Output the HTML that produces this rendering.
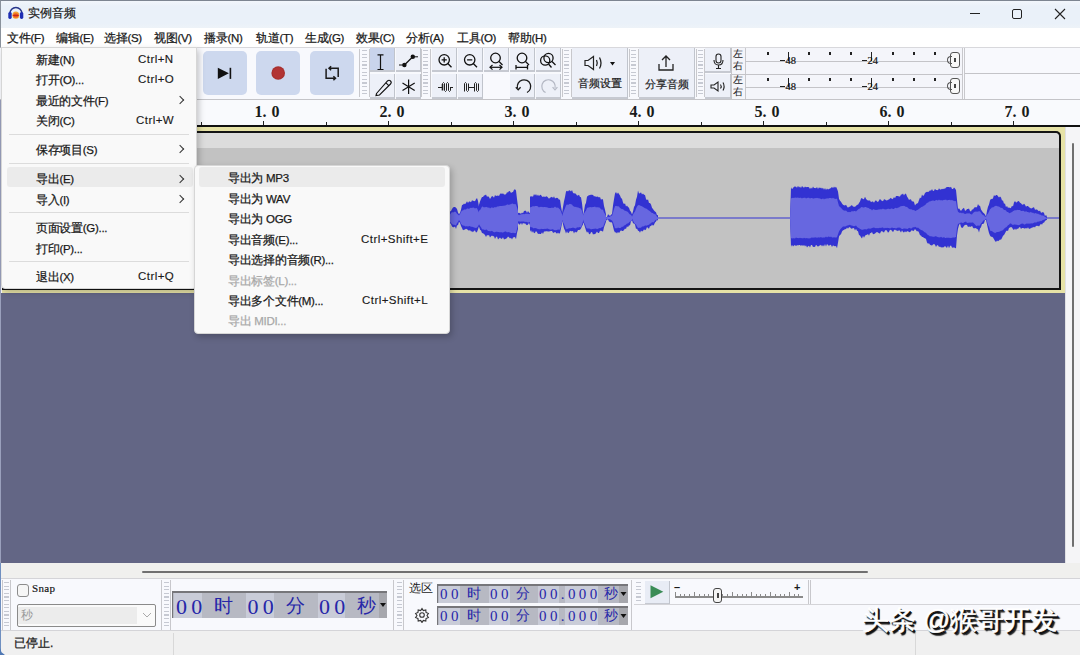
<!DOCTYPE html>
<html><head><meta charset="utf-8">
<style>
*{box-sizing:border-box;margin:0;padding:0}
html,body{width:1080px;height:655px;overflow:hidden;background:#f8f9fd;font-family:"Liberation Sans",sans-serif;font-size:12px;color:#1a1a1a}
.a{position:absolute}
.t{position:absolute;white-space:nowrap;line-height:1}
#title{left:0;top:0;width:1080px;height:28px;background:linear-gradient(#f2f6fb 0,#eaf1f9 5px,#eaf1f9 22px,#eef3f8 28px);border-top:1px solid #7d8591;border-left:1px solid #8a929c}
#menubar{left:0;top:28px;width:1080px;height:20px;background:#ffffff;border-bottom:1px solid #d8d8dc;border-left:1px solid #8a929c}
.mi{position:absolute;top:32px;font-size:11.5px;letter-spacing:-0.3px;-webkit-text-stroke:0.25px #1a1a1a;line-height:13px;white-space:nowrap;color:#1a1a1a}
.tb{background:#f8f9fd}
.btn{position:absolute;background:#edf0f8;border-right:1.5px solid #c0c4cc;border-bottom:2px solid #c6c9d1}
.grab{position:absolute;width:5px;background:repeating-linear-gradient(to bottom,#c6c9d2 0,#c6c9d2 1.2px,transparent 1.2px,transparent 3.6px)}
.sep{position:absolute;width:1px;background:#c8c8cc}
.tbtn{position:absolute;top:51px;width:44px;height:44px;background:#cdd8ee;border-radius:5px}
.menu{position:absolute;background:#f9f9f9;border:1px solid #d6d6d6;box-shadow:2px 3px 6px rgba(0,0,0,0.22)}
.mt{position:absolute;white-space:nowrap;font-size:11.5px;letter-spacing:-0.3px;-webkit-text-stroke:0.25px #1a1a1a;line-height:13px;color:#1a1a1a}
.sc{letter-spacing:0.45px;-webkit-text-stroke:0.15px #1a1a1a}
.dis{color:#a8a8a8;-webkit-text-stroke:0.25px #a8a8a8}
.msep{position:absolute;height:1px;background:#dcdcdc}
.hl{position:absolute;background:#ebebeb;border-radius:3px}
.dg{font-family:"Liberation Serif",serif;color:#2626a8}
.dc{font-family:"Liberation Serif",serif;color:#2626a8}
.arr{position:absolute;width:6px;height:6px;border-right:1.3px solid #333;border-top:1.3px solid #333;transform:rotate(45deg)}
</style></head><body>
<!-- title bar -->
<div id="title" class="a"></div>
<svg class="a" style="left:0;top:0" width="30" height="28">
 <path d="M9.9 13.5 A6 6 0 0 1 21.9 13.5" fill="none" stroke="#27358a" stroke-width="1.5"/>
 <rect x="8.3" y="11.9" width="3.4" height="7" rx="1.6" fill="#1e2eb4"/>
 <rect x="19.9" y="11.9" width="3.4" height="7" rx="1.6" fill="#1e2eb4"/>
 <ellipse cx="15.8" cy="15.2" rx="3.4" ry="3.6" fill="#f5a032"/>
 <ellipse cx="15.8" cy="15.4" rx="2.6" ry="2.2" fill="#e9571e"/>
 <path d="M12.8 15.4 H18.8" stroke="#c8201c" stroke-width="1"/>
</svg>
<div class="t" style="left:28px;top:7px;font-size:12px;color:#1a1a1a;-webkit-text-stroke:0.2px #1a1a1a">实例音频</div>
<div class="a" style="left:970px;top:13px;width:10px;height:1px;background:#222"></div>
<div class="a" style="left:1012px;top:9px;width:10px;height:10px;border:1.2px solid #222;border-radius:2px"></div>
<svg class="a" style="left:1054px;top:8px" width="12" height="12"><path d="M1 1 L11 11 M11 1 L1 11" stroke="#222" stroke-width="1.1"/></svg>
<!-- menu bar -->
<div id="menubar" class="a"></div>
<div class="mi" style="left:7px">文件(F)</div>
<div class="mi" style="left:56px">编辑(E)</div>
<div class="mi" style="left:104px">选择(S)</div>
<div class="mi" style="left:154px">视图(V)</div>
<div class="mi" style="left:204px">播录(N)</div>
<div class="mi" style="left:256px">轨道(T)</div>
<div class="mi" style="left:305px">生成(G)</div>
<div class="mi" style="left:356px">效果(C)</div>
<div class="mi" style="left:406px">分析(A)</div>
<div class="mi" style="left:457px">工具(O)</div>
<div class="mi" style="left:508px">帮助(H)</div>
<!-- top toolbar -->
<div class="a tb" style="left:0;top:48px;width:1080px;height:52px;border-bottom:1px solid #c4c4c8"></div>
<div class="tbtn" style="left:150px"></div>
<div class="tbtn" style="left:203px"></div>
<div class="tbtn" style="left:256px"></div>
<div class="tbtn" style="left:310px"></div>
<svg class="a" style="left:200px;top:50px" width="160" height="50">
 <path d="M17.8 17.8 L28.9 23.3 L17.8 28.9 Z" fill="#111"/><rect x="29.6" y="17.8" width="1.6" height="11.1" fill="#111"/>
 <circle cx="78.2" cy="23" r="6.8" fill="#a8302e"/><circle cx="78.2" cy="23" r="5.5" fill="#b23434"/>
 <g fill="none" stroke="#1a1a1a" stroke-width="1.5"><path d="M126.1 18.7 V28.3 H135.5 M133.4 26.3 L135.5 28.3 L133.4 30.3 M138.2 27 V18.3 H129 M131.1 16.3 L129 18.3 L131.1 20.3"/></g>
</svg>
<div class="sep" style="left:359px;top:49px;height:48px"></div>
<div class="grab" style="left:362px;top:50px;height:46px"></div>
<div class="sep" style="left:369px;top:49px;height:48px"></div>
<!-- tools -->
<div class="btn" style="left:370px;top:48px;width:25px;height:24px;background:#c9d4ec"></div>
<div class="btn" style="left:396px;top:48px;width:25px;height:24px"></div>
<div class="btn" style="left:370px;top:74px;width:25px;height:25px"></div>
<div class="btn" style="left:396px;top:74px;width:25px;height:25px"></div>
<svg class="a" style="left:370px;top:48px" width="52" height="52">
 <path d="M7.5 6.8 H13.5 M10.5 6.8 V21.5 M7.5 21.5 H13.5" stroke="#111" stroke-width="1.2" fill="none"/>
 <path d="M34.4 17 L42.8 8.8" stroke="#111" stroke-width="1.2"/><circle cx="34.4" cy="17" r="2.2" fill="#111"/><circle cx="42.8" cy="8.8" r="2.2" fill="#111"/><path d="M29 17 H34 M43 8.8 H48" stroke="#111" stroke-width="1"/>
 <path d="M6.5 45.5 L17.5 33 Q19 31.5 20.5 33 Q22 34.5 20.5 36 L9.5 47 L6 47.5 Z M16 34.8 L19 37.8" stroke="#111" stroke-width="1.1" fill="none"/>
 <path d="M38.6 31.5 V46 M32.5 35 L44.7 42.6 M44.7 35 L32.5 42.6" stroke="#111" stroke-width="1.2"/>
</svg>
<div class="sep" style="left:421px;top:49px;height:48px"></div>
<div class="grab" style="left:423px;top:50px;height:46px"></div>
<div class="sep" style="left:430px;top:49px;height:48px"></div>
<!-- zoom -->
<div class="btn" style="left:432px;top:48px;width:25px;height:24px"></div>
<div class="btn" style="left:458px;top:48px;width:25px;height:24px"></div>
<div class="btn" style="left:484px;top:48px;width:25px;height:24px"></div>
<div class="btn" style="left:510px;top:48px;width:25px;height:24px"></div>
<div class="btn" style="left:536px;top:48px;width:25px;height:24px"></div>
<div class="btn" style="left:432px;top:74px;width:25px;height:25px"></div>
<div class="btn" style="left:458px;top:74px;width:25px;height:25px"></div>
<div class="a" style="left:484px;top:74px;width:25px;height:25px;background:#f8f9fd"></div>
<div class="btn" style="left:510px;top:74px;width:25px;height:25px"></div>
<div class="btn" style="left:536px;top:74px;width:25px;height:25px"></div>
<svg class="a" style="left:432px;top:48px" width="130" height="52">
 <g stroke="#111" stroke-width="1.3" fill="none">
 <circle cx="12.2" cy="11.8" r="5.2"/><path d="M15.8 15.5 L19.5 19.3 M9.6 11.8 H14.8 M12.2 9.2 V14.4"/>
 <circle cx="37.7" cy="11.8" r="5.2"/><path d="M41.3 15.5 L45 19.3 M35.1 11.8 H40.3"/>
 <circle cx="63.5" cy="10" r="4.8"/><path d="M67 13.5 L70.5 17"/><path d="M58 19.3 H70" stroke-width="1.2"/><path d="M60.5 17 L58 19.3 L60.5 21.6 M67.5 17 L70 19.3 L67.5 21.6" stroke-width="1.2"/>
 <circle cx="90" cy="10" r="4.8"/><path d="M93.5 13.5 L97 17 M84 19.3 H95.5 M84 17 V21.5 M95.5 17 V21.5"/>
 <circle cx="113.2" cy="12.5" r="4.6"/><circle cx="116.5" cy="10" r="4.6"/><path d="M116.5 16 L119.5 19.5 M120 13.5 L123.5 17"/>
 </g>
 <g stroke="#222" stroke-width="1.1" fill="none">
 <path d="M6 39.5 H10.5 M18.5 39.5 H21" stroke-width="1.2"/>
 <path d="M10.5 39 V35.5 Q11.5 33.5 12.5 35.5 V42.5 Q13.5 44.5 14.5 42.5 V35.5 Q15.5 33.5 16.5 35.5 V42.5 Q17.5 44.5 18.5 42.5 V39" stroke-width="1"/>
 <path d="M10.5 36 V42.5" stroke-width="1.6"/>
 <path d="M32.5 43.5 V35.5 Q33.5 33.5 34.5 35.5 V42.5 Q35.5 44.5 36.5 42.5 V35.5 M36.5 39.5 H42.5 M42.5 43.5 V35.5 Q43.5 33.5 44.5 35.5 V42.5 Q45.5 44.5 46.5 42.5 V35.5" stroke-width="1"/>
 </g>
 <g stroke="#1a1a1a" stroke-width="1.3" fill="none"><path d="M85.5 40 A6.7 6.7 0 1 1 95 44.5"/><path d="M83.8 39.2 L86.2 41.8 L88.6 39.2"/></g>
 <g stroke="#b4b8c4" stroke-width="1.2" fill="none"><path d="M123 40 A6.7 6.7 0 1 0 113.6 44.5"/><path d="M120.6 39.2 L123 41.8 L125.4 39.2"/></g>
</svg>
<div class="sep" style="left:562px;top:49px;height:48px"></div>
<div class="grab" style="left:564px;top:50px;height:46px"></div>
<div class="sep" style="left:571px;top:49px;height:48px"></div>
<!-- audio settings -->
<div class="btn" style="left:572px;top:48px;width:56px;height:51px"></div>
<svg class="a" style="left:583px;top:55px" width="36" height="16"><path d="M2 5.5 H5 L10.5 1.5 V14.5 L5 10.5 H2 Z" fill="none" stroke="#222" stroke-width="1.2"/><path d="M13.5 5 Q15 8 13.5 11 M16.5 2.5 Q19.5 8 16.5 13.5" fill="none" stroke="#222" stroke-width="1.3"/><path d="M27 7 L32 7 L29.5 10.5 Z" fill="#111"/></svg>
<div class="t" style="left:578px;top:78px;font-size:11px;-webkit-text-stroke:0.2px #1a1a1a">音频设置</div>
<div class="sep" style="left:629px;top:49px;height:48px"></div>
<div class="grab" style="left:631px;top:50px;height:46px"></div>
<div class="sep" style="left:638px;top:49px;height:48px"></div>
<!-- share -->
<div class="btn" style="left:639px;top:48px;width:56px;height:51px"></div>
<svg class="a" style="left:656px;top:53px" width="20" height="20"><path d="M3 11 V17 H17 V11" fill="none" stroke="#222" stroke-width="1.3"/><path d="M10 14 V3 M6 7 L10 3 L14 7" fill="none" stroke="#222" stroke-width="1.3"/></svg>
<div class="t" style="left:645px;top:79px;font-size:11px;-webkit-text-stroke:0.2px #1a1a1a">分享音频</div>
<div class="sep" style="left:696px;top:49px;height:48px"></div>
<div class="grab" style="left:698px;top:50px;height:46px"></div>
<div class="sep" style="left:704px;top:49px;height:48px"></div>
<!-- meters -->
<div class="btn" style="left:705px;top:48px;width:26px;height:25px"></div>
<div class="btn" style="left:705px;top:74px;width:26px;height:25px"></div>
<svg class="a" style="left:708px;top:50px" width="20" height="48">
 <rect x="8" y="4" width="5" height="9" rx="2.5" fill="none" stroke="#222" stroke-width="1.1"/><path d="M6 10 Q6 15 10.5 15 Q15 15 15 10 M10.5 15 V18 M8 18.5 H13" fill="none" stroke="#222" stroke-width="1.1"/>
 <path d="M3 35 H6 L10 32 V41 L6 38 H3 Z" fill="none" stroke="#222" stroke-width="1.1"/><path d="M12.5 34.5 Q14 36.5 12.5 38.5 M15 32.5 Q17.2 36.5 15 40.5" fill="none" stroke="#222" stroke-width="1.1"/>
</svg>
<div class="a" style="left:731px;top:48px;width:232px;height:51px;background:#f4f5fa;border-left:1px solid #c4c4c8"></div>
<div class="t" style="left:733px;top:49px;font-size:10px">左</div>
<div class="t" style="left:733px;top:61px;font-size:10px">右</div>
<div class="t" style="left:733px;top:75px;font-size:10px">左</div>
<div class="t" style="left:733px;top:87px;font-size:10px">右</div>
<div class="a" style="left:745px;top:48px;width:218px;height:51px;border-left:1px solid #c8c8cc"></div>
<div class="a" style="left:745px;top:61px;width:215px;height:1px;background:#c4c4c8"></div>
<div class="a" style="left:731px;top:74px;width:232px;height:1px;background:#c4c4c8"></div>
<div class="a" style="left:745px;top:87px;width:215px;height:1px;background:#c4c4c8"></div>
<div class="a" style="left:731px;top:99px;width:232px;height:1px;background:#c4c4c8"></div>
<div class="a" style="left:767px;top:52px;width:1.5px;height:2.5px;background:#222"></div>
<div class="a" style="left:767px;top:78px;width:1.5px;height:2.5px;background:#222"></div>
<div class="a" style="left:788px;top:52px;width:1px;height:9px;background:#222"></div>
<div class="a" style="left:788px;top:78px;width:1px;height:9px;background:#222"></div>
<div class="a" style="left:808px;top:52px;width:1.5px;height:2.5px;background:#222"></div>
<div class="a" style="left:808px;top:78px;width:1.5px;height:2.5px;background:#222"></div>
<div class="a" style="left:829px;top:52px;width:1.5px;height:2.5px;background:#222"></div>
<div class="a" style="left:829px;top:78px;width:1.5px;height:2.5px;background:#222"></div>
<div class="a" style="left:850px;top:52px;width:1.5px;height:2.5px;background:#222"></div>
<div class="a" style="left:850px;top:78px;width:1.5px;height:2.5px;background:#222"></div>
<div class="a" style="left:871px;top:52px;width:1px;height:9px;background:#222"></div>
<div class="a" style="left:871px;top:78px;width:1px;height:9px;background:#222"></div>
<div class="a" style="left:892px;top:52px;width:1.5px;height:2.5px;background:#222"></div>
<div class="a" style="left:892px;top:78px;width:1.5px;height:2.5px;background:#222"></div>
<div class="a" style="left:913px;top:52px;width:1.5px;height:2.5px;background:#222"></div>
<div class="a" style="left:913px;top:78px;width:1.5px;height:2.5px;background:#222"></div>
<div class="a" style="left:934px;top:52px;width:1.5px;height:2.5px;background:#222"></div>
<div class="a" style="left:934px;top:78px;width:1.5px;height:2.5px;background:#222"></div>
<div class="a" style="left:780px;top:60px;width:5px;height:1px;background:#222"></div><div class="t" style="left:785.5px;top:55.5px;font-size:10.5px;color:#111;font-family:'Liberation Serif',serif;-webkit-text-stroke:0.2px #111">48</div>
<div class="a" style="left:862px;top:60px;width:5px;height:1px;background:#222"></div><div class="t" style="left:867.5px;top:55.5px;font-size:10.5px;color:#111;font-family:'Liberation Serif',serif;-webkit-text-stroke:0.2px #111">24</div>
<div class="a" style="left:780px;top:86px;width:5px;height:1px;background:#222"></div><div class="t" style="left:785.5px;top:81.5px;font-size:10.5px;color:#111;font-family:'Liberation Serif',serif;-webkit-text-stroke:0.2px #111">48</div>
<div class="a" style="left:862px;top:86px;width:5px;height:1px;background:#222"></div><div class="t" style="left:867.5px;top:81.5px;font-size:10.5px;color:#111;font-family:'Liberation Serif',serif;-webkit-text-stroke:0.2px #111">24</div>
<div class="a" style="left:950px;top:52px;width:10px;height:16px;border:1.2px solid #555;border-radius:3px;background:#f8f8f8"></div>
<div class="a" style="left:954px;top:58px;width:1.5px;height:4px;background:#444"></div>
<div class="a" style="left:947px;top:56px;width:5px;height:8px;border:1px solid #555;border-right:none;border-radius:4px 0 0 4px"></div>
<div class="a" style="left:950px;top:78px;width:10px;height:16px;border:1.2px solid #555;border-radius:3px;background:#f8f8f8"></div>
<div class="a" style="left:954px;top:84px;width:1.5px;height:4px;background:#444"></div>
<div class="a" style="left:947px;top:82px;width:5px;height:8px;border:1px solid #555;border-right:none;border-radius:4px 0 0 4px"></div>
<div class="sep" style="left:962px;top:48px;height:51px"></div>
<div class="sep" style="left:964px;top:48px;height:51px"></div>
<div class="a" style="left:965px;top:73px;width:115px;height:1px;background:#c4c4c8"></div>
<!-- ruler -->
<div class="a" style="left:0;top:100px;width:1080px;height:27px;background:#f9fafd"></div>
<div class="a" style="left:138px;top:121px;width:1px;height:4px;background:#222"></div>
<div class="a" style="left:201px;top:122px;width:1px;height:3px;background:#222"></div>
<div class="a" style="left:263px;top:121px;width:1px;height:4px;background:#222"></div>
<div class="t" style="left:254.5px;top:104px;font-family:'Liberation Serif',serif;font-weight:bold;font-size:16px">1.</div>
<div class="t" style="left:271.5px;top:104px;font-family:'Liberation Serif',serif;font-weight:bold;font-size:16px">0</div>
<div class="a" style="left:326px;top:122px;width:1px;height:3px;background:#222"></div>
<div class="a" style="left:388px;top:121px;width:1px;height:4px;background:#222"></div>
<div class="t" style="left:379.5px;top:104px;font-family:'Liberation Serif',serif;font-weight:bold;font-size:16px">2.</div>
<div class="t" style="left:396.5px;top:104px;font-family:'Liberation Serif',serif;font-weight:bold;font-size:16px">0</div>
<div class="a" style="left:451px;top:122px;width:1px;height:3px;background:#222"></div>
<div class="a" style="left:513px;top:121px;width:1px;height:4px;background:#222"></div>
<div class="t" style="left:504.5px;top:104px;font-family:'Liberation Serif',serif;font-weight:bold;font-size:16px">3.</div>
<div class="t" style="left:521.5px;top:104px;font-family:'Liberation Serif',serif;font-weight:bold;font-size:16px">0</div>
<div class="a" style="left:576px;top:122px;width:1px;height:3px;background:#222"></div>
<div class="a" style="left:638px;top:121px;width:1px;height:4px;background:#222"></div>
<div class="t" style="left:629.5px;top:104px;font-family:'Liberation Serif',serif;font-weight:bold;font-size:16px">4.</div>
<div class="t" style="left:646.5px;top:104px;font-family:'Liberation Serif',serif;font-weight:bold;font-size:16px">0</div>
<div class="a" style="left:701px;top:122px;width:1px;height:3px;background:#222"></div>
<div class="a" style="left:763px;top:121px;width:1px;height:4px;background:#222"></div>
<div class="t" style="left:754.5px;top:104px;font-family:'Liberation Serif',serif;font-weight:bold;font-size:16px">5.</div>
<div class="t" style="left:771.5px;top:104px;font-family:'Liberation Serif',serif;font-weight:bold;font-size:16px">0</div>
<div class="a" style="left:826px;top:122px;width:1px;height:3px;background:#222"></div>
<div class="a" style="left:888px;top:121px;width:1px;height:4px;background:#222"></div>
<div class="t" style="left:879.5px;top:104px;font-family:'Liberation Serif',serif;font-weight:bold;font-size:16px">6.</div>
<div class="t" style="left:896.5px;top:104px;font-family:'Liberation Serif',serif;font-weight:bold;font-size:16px">0</div>
<div class="a" style="left:951px;top:122px;width:1px;height:3px;background:#222"></div>
<div class="a" style="left:1013px;top:121px;width:1px;height:4px;background:#222"></div>
<div class="t" style="left:1004.5px;top:104px;font-family:'Liberation Serif',serif;font-weight:bold;font-size:16px">7.</div>
<div class="t" style="left:1021.5px;top:104px;font-family:'Liberation Serif',serif;font-weight:bold;font-size:16px">0</div>
<div class="a" style="left:2px;top:125px;width:1078px;height:2px;background:#111"></div>
<!-- track -->
<div class="a" style="left:2px;top:127px;width:1063px;height:166px;background:#e6e2a6"></div>
<div class="a" style="left:2px;top:131px;width:1059px;height:159px;background:#141414;border-radius:0 5px 0 0"></div>
<div class="a" style="left:2px;top:133px;width:1057px;height:155px;background:#c2c2c2;border-radius:0 4px 0 0"></div>
<div class="a" style="left:2px;top:133px;width:1057px;height:15px;background:#dcdcdc;border-radius:0 4px 0 0"></div>
<svg width="1080" height="655" style="position:absolute;left:0;top:0"><line x1="440" y1="218" x2="1059" y2="218" stroke="#3232d2" stroke-width="1"/><path fill="#3232d2" d="M450,211.5 L451,211.0 L452,209.1 L453,207.4 L454,207.1 L455,207.0 L456,207.8 L457,208.9 L458,212.4 L459,214.2 L460,212.8 L461,209.7 L462,204.9 L463,204.7 L464,203.5 L465,204.2 L466,203.1 L467,201.3 L468,202.9 L469,201.4 L470,201.5 L471,202.2 L472,200.2 L473,200.7 L474,200.9 L475,201.2 L476,199.2 L477,198.0 L478,201.1 L479,206.8 L479,226.2 L478,229.5 L477,232.0 L476,232.6 L475,230.5 L474,230.8 L473,232.3 L472,231.2 L471,231.4 L470,230.1 L469,230.8 L468,230.1 L467,229.3 L466,228.7 L465,229.4 L464,229.7 L463,230.2 L462,227.9 L461,226.0 L460,223.0 L459,221.7 L458,225.3 L457,225.2 L456,229.0 L455,226.5 L454,227.3 L453,227.3 L452,226.6 L451,224.2 L450,223.0 Z M479,204.7 L480,201.5 L481,199.0 L482,197.1 L483,197.0 L484,195.5 L485,195.3 L486,194.6 L487,196.8 L488,196.3 L489,197.1 L490,199.0 L491,197.6 L492,196.1 L493,196.5 L494,197.7 L495,194.9 L496,196.1 L497,195.8 L498,195.4 L499,196.1 L500,194.0 L501,193.3 L502,194.1 L503,193.3 L504,194.6 L505,194.6 L506,194.3 L507,192.3 L508,192.6 L509,191.1 L510,191.3 L511,192.9 L512,192.3 L513,192.1 L514,189.7 L515,189.3 L516,190.4 L517,199.0 L518,206.5 L518,228.9 L517,232.9 L516,239.2 L515,237.1 L514,237.2 L513,237.6 L512,239.5 L511,237.8 L510,238.6 L509,237.3 L508,236.6 L507,238.1 L506,238.7 L505,238.9 L504,239.5 L503,237.2 L502,238.8 L501,238.8 L500,237.6 L499,238.6 L498,239.4 L497,236.6 L496,236.9 L495,239.0 L494,236.3 L493,236.3 L492,235.5 L491,236.3 L490,237.5 L489,234.9 L488,235.5 L487,234.9 L486,237.1 L485,235.1 L484,234.0 L483,233.2 L482,233.0 L481,230.4 L480,229.7 L479,226.7 Z M518,212.9 L519,212.8 L520,213.3 L521,213.8 L522,212.5 L523,213.2 L524,210.9 L525,210.7 L526,210.7 L527,212.9 L528,211.0 L529,212.5 L530,213.1 L530,225.4 L529,222.9 L528,224.6 L527,225.2 L526,224.5 L525,223.2 L524,223.8 L523,222.7 L522,225.0 L521,222.8 L520,224.5 L519,224.5 L518,223.1 Z M530,196.6 L531,196.6 L532,196.3 L533,196.7 L534,193.9 L535,195.4 L536,194.1 L537,196.1 L538,194.4 L539,196.2 L540,194.8 L541,194.9 L542,196.4 L543,196.9 L544,196.3 L545,197.3 L546,196.3 L547,196.4 L548,197.4 L549,198.7 L550,197.8 L551,197.2 L552,196.8 L553,198.1 L554,196.3 L555,198.4 L556,198.0 L557,197.7 L558,198.2 L559,199.8 L560,199.5 L561,206.6 L562,211.7 L562,223.5 L561,228.4 L560,233.0 L559,233.7 L558,232.5 L557,233.8 L556,232.8 L555,231.7 L554,232.7 L553,232.8 L552,231.0 L551,230.9 L550,231.3 L549,231.5 L548,231.4 L547,231.2 L546,231.2 L545,231.6 L544,231.4 L543,233.9 L542,232.3 L541,234.0 L540,234.1 L539,233.7 L538,234.0 L537,232.3 L536,231.0 L535,232.8 L534,233.3 L533,231.0 L532,232.7 L531,230.1 L530,231.8 Z M562,213.2 L563,207.1 L564,201.3 L565,196.9 L566,191.4 L567,190.7 L568,191.4 L569,190.3 L570,190.5 L571,191.4 L572,190.1 L573,192.7 L574,193.4 L575,193.3 L576,193.9 L577,195.4 L578,195.6 L579,194.7 L580,197.1 L581,197.2 L582,203.2 L583,212.5 L583,224.6 L582,226.3 L581,228.5 L580,229.8 L579,230.1 L578,229.9 L577,232.0 L576,232.6 L575,231.6 L574,233.4 L573,231.1 L572,231.3 L571,231.3 L570,230.7 L569,232.4 L568,233.2 L567,231.3 L566,233.5 L565,230.6 L564,228.5 L563,224.3 L562,220.6 Z M583,215.3 L584,211.0 L585,205.1 L586,202.7 L587,196.6 L588,195.9 L589,195.0 L590,195.2 L591,194.6 L592,195.0 L593,194.8 L594,196.5 L595,195.9 L596,197.0 L597,196.5 L598,196.7 L599,197.6 L600,197.0 L601,199.7 L602,199.1 L603,199.4 L604,206.1 L605,209.8 L606,214.2 L606,221.7 L605,224.4 L604,227.3 L603,231.7 L602,230.9 L601,230.7 L600,230.8 L599,233.0 L598,232.9 L597,231.6 L596,233.1 L595,234.2 L594,233.9 L593,234.4 L592,232.1 L591,232.3 L590,234.3 L589,234.0 L588,231.6 L587,232.8 L586,230.5 L585,227.2 L584,224.1 L583,222.6 Z M606,217.0 L607,217.1 L608,214.2 L609,215.1 L610,216.0 L611,214.8 L612,213.9 L613,205.6 L614,199.2 L615,193.4 L616,192.1 L617,193.9 L618,192.6 L619,194.1 L620,195.5 L621,197.9 L622,198.8 L623,202.6 L624,204.2 L625,203.2 L626,206.4 L627,205.4 L628,207.0 L629,207.8 L630,210.8 L631,211.8 L632,214.5 L632,220.8 L631,221.3 L630,225.6 L629,225.3 L628,227.3 L627,226.2 L626,229.0 L625,228.4 L624,229.9 L623,231.0 L622,231.1 L621,230.3 L620,231.6 L619,233.2 L618,231.7 L617,233.6 L616,232.3 L615,232.4 L614,230.6 L613,226.5 L612,222.2 L611,222.5 L610,222.0 L609,221.5 L608,219.6 L607,219.6 L606,221.1 Z M632,214.6 L633,211.6 L634,207.1 L635,205.2 L636,199.7 L637,196.8 L638,190.6 L639,193.5 L640,193.2 L641,192.3 L642,194.4 L643,193.5 L644,194.8 L645,195.0 L646,198.9 L647,200.2 L648,199.2 L649,203.0 L650,202.9 L651,204.6 L652,207.7 L653,208.9 L654,210.6 L655,211.5 L656,212.3 L657,215.2 L658,215.1 L658,220.8 L657,219.7 L656,221.6 L655,222.5 L654,224.8 L653,225.7 L652,224.6 L651,226.2 L650,226.1 L649,228.8 L648,227.9 L647,227.1 L646,229.4 L645,230.3 L644,229.3 L643,231.1 L642,231.4 L641,230.6 L640,232.7 L639,231.0 L638,230.7 L637,228.6 L636,228.9 L635,224.6 L634,223.6 L633,223.3 L632,219.9 Z M790,218.5 L791,187.3 L792,189.2 L793,188.1 L794,186.8 L795,186.5 L796,186.7 L797,187.8 L798,185.8 L799,187.6 L800,186.4 L801,188.0 L802,185.9 L803,186.9 L804,187.8 L805,186.4 L806,187.2 L807,187.0 L808,187.1 L809,187.3 L810,188.9 L811,187.5 L812,188.7 L813,186.6 L814,187.9 L815,187.9 L816,188.2 L817,186.9 L818,188.9 L819,187.3 L820,188.2 L821,187.6 L822,188.8 L823,187.7 L824,189.8 L825,188.1 L826,190.0 L827,188.4 L828,189.4 L829,189.1 L830,188.5 L831,188.1 L832,186.7 L833,188.2 L834,186.6 L835,187.7 L836,186.7 L837,188.7 L838,191.6 L839,198.8 L840,200.8 L841,201.8 L842,203.6 L843,204.8 L844,205.2 L845,205.6 L846,204.8 L847,206.6 L848,207.8 L849,206.7 L850,206.7 L851,205.5 L852,205.3 L853,206.4 L854,206.7 L855,206.8 L856,206.0 L857,204.7 L858,204.7 L859,203.1 L860,201.4 L861,198.4 L862,198.0 L863,199.2 L864,198.9 L865,196.7 L866,198.8 L867,200.0 L868,200.6 L869,200.5 L870,200.5 L871,202.2 L872,201.6 L873,201.6 L874,202.8 L875,200.9 L876,200.3 L877,201.5 L878,201.9 L879,200.6 L880,198.8 L881,200.3 L882,200.7 L883,201.2 L884,199.2 L885,199.4 L886,200.2 L887,200.4 L888,199.8 L889,199.5 L890,198.6 L891,197.7 L892,199.3 L893,198.7 L894,197.1 L895,198.3 L896,196.0 L897,195.9 L898,195.9 L899,196.6 L900,196.4 L901,194.5 L902,194.4 L903,193.6 L904,195.5 L905,193.7 L906,193.7 L907,196.6 L908,198.0 L909,200.1 L910,199.2 L911,199.5 L912,201.4 L913,201.2 L914,201.9 L915,205.5 L916,204.1 L917,203.5 L918,202.9 L919,199.9 L920,197.6 L921,198.3 L922,194.5 L923,196.0 L924,195.2 L925,192.9 L926,192.2 L927,191.8 L928,192.1 L929,191.4 L930,190.2 L931,190.8 L932,189.1 L933,191.1 L934,190.7 L935,188.8 L936,190.1 L937,190.0 L938,190.3 L939,188.3 L940,189.4 L941,189.4 L942,188.7 L943,189.3 L944,188.4 L945,188.7 L946,187.5 L947,187.0 L948,187.1 L949,186.9 L950,187.5 L951,186.8 L952,188.9 L953,189.1 L954,187.4 L955,188.4 L956,190.0 L957,199.7 L958,209.0 L959,208.2 L960,209.8 L961,211.0 L962,209.4 L963,208.4 L964,207.8 L965,210.8 L966,210.5 L967,208.9 L968,209.0 L969,208.6 L970,211.1 L971,211.4 L972,209.6 L973,209.5 L974,207.9 L975,207.1 L976,207.6 L977,207.0 L978,204.0 L979,205.8 L980,205.8 L981,209.6 L982,211.1 L983,212.5 L984,213.3 L985,214.4 L986,216.6 L987,210.8 L988,206.7 L989,204.6 L990,200.4 L991,198.7 L992,199.2 L993,198.2 L994,195.1 L995,196.2 L996,195.0 L997,195.0 L998,196.3 L999,197.4 L1000,196.5 L1001,197.5 L1002,200.5 L1003,200.5 L1004,203.8 L1005,203.4 L1006,207.2 L1007,205.8 L1008,208.1 L1009,207.2 L1010,208.2 L1011,207.7 L1012,205.8 L1013,206.4 L1014,202.5 L1015,201.1 L1016,202.5 L1017,202.2 L1018,201.1 L1019,201.3 L1020,202.7 L1021,203.2 L1022,204.6 L1023,204.8 L1024,203.7 L1025,204.8 L1026,206.7 L1027,206.1 L1028,206.0 L1029,207.3 L1030,207.8 L1031,208.4 L1032,208.2 L1033,207.6 L1034,207.3 L1035,209.7 L1036,209.6 L1037,209.4 L1038,210.4 L1039,211.2 L1040,210.4 L1041,212.8 L1042,212.6 L1043,211.9 L1044,213.0 L1045,216.3 L1046,214.8 L1047,217.1 L1047,219.7 L1046,220.2 L1045,221.1 L1044,222.8 L1043,222.8 L1042,224.8 L1041,223.7 L1040,225.1 L1039,226.6 L1038,225.7 L1037,226.1 L1036,225.8 L1035,227.4 L1034,226.8 L1033,227.6 L1032,227.4 L1031,228.3 L1030,228.6 L1029,229.1 L1028,227.2 L1027,228.7 L1026,227.8 L1025,228.7 L1024,228.3 L1023,227.9 L1022,228.0 L1021,229.0 L1020,226.9 L1019,227.6 L1018,229.1 L1017,228.6 L1016,229.9 L1015,228.5 L1014,230.1 L1013,229.2 L1012,227.4 L1011,227.1 L1010,227.5 L1009,228.0 L1008,231.0 L1007,230.4 L1006,231.2 L1005,233.2 L1004,234.9 L1003,235.8 L1002,238.1 L1001,239.7 L1000,239.5 L999,240.6 L998,241.2 L997,240.5 L996,242.0 L995,241.0 L994,239.3 L993,237.6 L992,236.8 L991,236.7 L990,235.6 L989,232.9 L988,228.9 L987,224.4 L986,220.0 L985,220.1 L984,223.3 L983,224.0 L982,224.0 L981,227.2 L980,228.6 L979,232.4 L978,229.6 L977,229.0 L976,228.3 L975,228.1 L974,228.6 L973,227.8 L972,225.7 L971,226.7 L970,226.7 L969,226.5 L968,227.0 L967,224.9 L966,224.8 L965,225.1 L964,225.8 L963,227.4 L962,228.0 L961,226.9 L960,223.6 L959,225.3 L958,228.7 L957,235.4 L956,248.2 L955,248.0 L954,247.3 L953,247.7 L952,247.4 L951,245.6 L950,245.9 L949,248.2 L948,245.4 L947,247.9 L946,247.0 L945,245.9 L944,247.1 L943,247.4 L942,247.2 L941,247.5 L940,246.6 L939,247.1 L938,245.3 L937,245.2 L936,246.9 L935,244.7 L934,243.9 L933,244.5 L932,245.6 L931,245.2 L930,244.8 L929,243.2 L928,243.8 L927,242.4 L926,239.1 L925,238.2 L924,238.1 L923,237.0 L922,237.0 L921,235.6 L920,235.2 L919,232.4 L918,231.0 L917,231.4 L916,230.3 L915,229.1 L914,230.5 L913,231.3 L912,229.9 L911,230.9 L910,232.2 L909,231.9 L908,231.2 L907,231.2 L906,232.2 L905,231.3 L904,232.6 L903,232.0 L902,230.3 L901,232.5 L900,230.9 L899,230.1 L898,231.3 L897,230.6 L896,230.6 L895,229.6 L894,230.2 L893,232.2 L892,230.8 L891,230.0 L890,229.7 L889,231.7 L888,232.8 L887,230.7 L886,230.1 L885,230.6 L884,232.5 L883,232.0 L882,231.1 L881,231.6 L880,233.5 L879,233.3 L878,232.4 L877,232.0 L876,232.6 L875,233.5 L874,233.9 L873,234.2 L872,232.0 L871,233.0 L870,233.3 L869,235.8 L868,233.9 L867,234.8 L866,235.0 L865,235.8 L864,237.8 L863,235.7 L862,238.4 L861,237.3 L860,235.6 L859,235.0 L858,231.2 L857,230.8 L856,228.7 L855,230.6 L854,228.2 L853,227.9 L852,228.8 L851,228.5 L850,227.3 L849,227.3 L848,228.8 L847,227.6 L846,229.2 L845,229.0 L844,230.1 L843,230.2 L842,231.4 L841,234.2 L840,234.9 L839,236.6 L838,242.7 L837,248.2 L836,246.0 L835,246.3 L834,246.1 L833,245.2 L832,247.0 L831,245.0 L830,244.7 L829,245.9 L828,245.1 L827,243.9 L826,246.6 L825,243.9 L824,246.5 L823,245.1 L822,246.5 L821,244.7 L820,245.4 L819,245.8 L818,246.8 L817,245.8 L816,244.7 L815,246.9 L814,246.8 L813,247.1 L812,245.1 L811,245.1 L810,247.5 L809,245.7 L808,246.2 L807,247.4 L806,245.3 L805,246.6 L804,244.8 L803,246.2 L802,244.8 L801,246.1 L800,245.1 L799,245.1 L798,245.5 L797,245.1 L796,246.3 L795,245.1 L794,245.6 L793,246.4 L792,244.8 L791,246.8 L790,218.5 Z"/><path fill="#6767e0" d="M450,214.5 L451,213.2 L452,212.1 L453,212.4 L454,212.0 L455,211.5 L456,212.2 L457,213.7 L458,214.5 L459,215.4 L460,213.9 L461,212.1 L462,210.6 L463,210.4 L464,209.5 L465,209.6 L466,209.4 L467,208.6 L468,208.5 L469,209.0 L470,207.9 L471,207.8 L472,208.1 L473,207.4 L474,207.8 L475,208.5 L476,208.0 L477,208.2 L478,210.5 L479,212.4 L479,224.4 L478,226.3 L477,227.5 L476,227.9 L475,227.8 L474,227.5 L473,227.1 L472,226.7 L471,226.8 L470,226.3 L469,226.1 L468,226.8 L467,226.1 L466,226.4 L465,226.2 L464,225.4 L463,225.7 L462,224.7 L461,223.7 L460,221.2 L459,220.0 L458,221.9 L457,223.1 L456,225.6 L455,225.0 L454,224.7 L453,224.8 L452,223.9 L451,223.1 L450,221.8 Z M479,210.5 L480,210.2 L481,208.6 L482,206.6 L483,206.8 L484,207.6 L485,206.9 L486,207.3 L487,206.8 L488,208.0 L489,207.3 L490,208.6 L491,207.7 L492,207.2 L493,208.1 L494,207.4 L495,207.1 L496,207.4 L497,206.5 L498,206.4 L499,206.2 L500,205.9 L501,206.0 L502,206.1 L503,205.7 L504,205.7 L505,205.5 L506,205.3 L507,204.6 L508,204.6 L509,205.0 L510,204.3 L511,204.3 L512,203.5 L513,203.7 L514,204.3 L515,204.1 L516,204.5 L517,207.6 L518,211.0 L518,225.2 L517,229.0 L516,232.9 L515,233.3 L514,233.0 L513,232.7 L512,233.1 L511,233.1 L510,232.5 L509,232.3 L508,232.0 L507,232.4 L506,231.6 L505,231.4 L504,232.0 L503,232.5 L502,232.5 L501,231.9 L500,232.5 L499,231.9 L498,232.1 L497,231.8 L496,231.7 L495,232.3 L494,232.2 L493,231.7 L492,230.8 L491,231.2 L490,231.2 L489,231.1 L488,230.9 L487,229.8 L486,229.6 L485,230.3 L484,229.4 L483,229.6 L482,229.3 L481,227.3 L480,226.0 L479,224.2 Z M518,214.7 L519,214.7 L520,215.3 L521,214.1 L522,214.4 L523,213.8 L524,214.3 L525,214.1 L526,213.4 L527,214.1 L528,213.5 L529,214.3 L530,213.5 L530,221.7 L529,222.6 L528,222.6 L527,222.0 L526,221.8 L525,221.9 L524,221.4 L523,221.6 L522,221.5 L521,221.4 L520,221.7 L519,221.2 L518,221.5 Z M530,207.5 L531,207.0 L532,206.7 L533,206.0 L534,206.4 L535,205.9 L536,206.1 L537,206.1 L538,206.4 L539,207.4 L540,206.7 L541,206.9 L542,206.7 L543,207.3 L544,207.1 L545,207.0 L546,207.3 L547,207.3 L548,207.8 L549,208.0 L550,208.1 L551,207.9 L552,207.4 L553,208.0 L554,207.5 L555,206.6 L556,207.5 L557,207.8 L558,207.6 L559,208.5 L560,209.4 L561,211.6 L562,214.2 L562,222.2 L561,226.0 L560,229.4 L559,229.7 L558,229.5 L557,230.1 L556,230.2 L555,230.3 L554,229.9 L553,229.2 L552,229.3 L551,229.8 L550,229.4 L549,229.2 L548,228.7 L547,228.4 L546,228.9 L545,228.7 L544,229.0 L543,229.0 L542,228.9 L541,228.8 L540,229.6 L539,228.9 L538,229.2 L537,228.4 L536,228.3 L535,227.9 L534,228.2 L533,228.2 L532,227.1 L531,227.5 L530,226.6 Z M562,216.2 L563,213.3 L564,210.5 L565,208.2 L566,205.6 L567,204.2 L568,204.9 L569,204.2 L570,203.7 L571,204.2 L572,204.6 L573,206.0 L574,206.4 L575,207.0 L576,206.7 L577,207.4 L578,207.2 L579,208.1 L580,208.2 L581,208.8 L582,210.9 L583,214.4 L583,221.5 L582,224.8 L581,227.4 L580,227.0 L579,227.2 L578,227.6 L577,227.2 L576,228.5 L575,228.2 L574,228.0 L573,227.6 L572,228.0 L571,228.1 L570,228.5 L569,228.0 L568,229.1 L567,228.7 L566,229.5 L565,226.4 L564,224.0 L563,222.2 L562,219.7 Z M583,215.6 L584,213.6 L585,212.0 L586,210.5 L587,207.9 L588,207.4 L589,207.4 L590,207.1 L591,207.3 L592,207.3 L593,206.9 L594,206.9 L595,206.5 L596,207.6 L597,207.0 L598,207.4 L599,207.3 L600,208.1 L601,209.3 L602,209.8 L603,209.4 L604,212.5 L605,214.1 L606,215.9 L606,220.5 L605,221.7 L604,224.6 L603,227.3 L602,226.8 L601,228.2 L600,228.1 L599,228.3 L598,228.7 L597,229.2 L596,228.6 L595,228.7 L594,228.8 L593,229.0 L592,228.9 L591,229.5 L590,228.7 L589,228.5 L588,228.5 L587,228.6 L586,227.3 L585,224.2 L584,222.7 L583,219.6 Z M606,217.2 L607,217.2 L608,216.7 L609,217.1 L610,216.7 L611,215.8 L612,215.8 L613,212.7 L614,209.0 L615,206.2 L616,205.8 L617,206.2 L618,206.3 L619,206.5 L620,208.1 L621,208.5 L622,209.3 L623,209.0 L624,210.3 L625,210.8 L626,211.0 L627,211.4 L628,212.1 L629,213.5 L630,214.6 L631,214.8 L632,216.4 L632,219.9 L631,221.4 L630,221.6 L629,222.5 L628,223.4 L627,223.6 L626,224.6 L625,225.3 L624,225.4 L623,226.9 L622,226.6 L621,227.8 L620,228.1 L619,227.9 L618,227.5 L617,228.6 L616,227.9 L615,228.5 L614,225.2 L613,222.3 L612,220.5 L611,220.1 L610,219.3 L609,219.3 L608,219.0 L607,219.5 L606,218.6 Z M632,216.7 L633,214.4 L634,212.8 L635,211.5 L636,208.7 L637,206.5 L638,205.3 L639,204.9 L640,205.6 L641,206.0 L642,206.2 L643,207.1 L644,207.4 L645,208.3 L646,208.4 L647,208.9 L648,210.1 L649,210.5 L650,211.2 L651,212.2 L652,213.0 L653,213.0 L654,214.2 L655,214.0 L656,214.9 L657,216.8 L658,217.5 L658,218.8 L657,219.7 L656,219.8 L655,220.6 L654,221.9 L653,222.4 L652,222.1 L651,223.4 L650,223.5 L649,225.0 L648,224.8 L647,225.8 L646,225.4 L645,225.6 L644,226.2 L643,226.4 L642,226.5 L641,227.7 L640,227.7 L639,227.7 L638,227.9 L637,226.5 L636,224.5 L635,224.1 L634,222.6 L633,220.6 L632,218.5 Z M790,218.0 L791,198.4 L792,197.9 L793,197.7 L794,197.9 L795,197.5 L796,197.8 L797,197.7 L798,197.4 L799,197.9 L800,197.8 L801,197.7 L802,198.5 L803,197.7 L804,197.9 L805,197.6 L806,198.4 L807,198.0 L808,197.7 L809,197.8 L810,198.4 L811,198.0 L812,198.1 L813,198.5 L814,198.6 L815,198.1 L816,198.2 L817,197.8 L818,198.2 L819,198.3 L820,198.5 L821,198.9 L822,199.3 L823,198.3 L824,199.4 L825,198.6 L826,199.0 L827,198.1 L828,198.8 L829,198.0 L830,198.0 L831,198.0 L832,198.5 L833,197.8 L834,198.5 L835,198.8 L836,199.1 L837,198.6 L838,202.5 L839,205.9 L840,207.1 L841,207.7 L842,209.0 L843,210.0 L844,210.4 L845,210.8 L846,210.6 L847,211.6 L848,212.2 L849,211.7 L850,212.3 L851,211.8 L852,210.9 L853,211.6 L854,211.0 L855,211.1 L856,211.5 L857,210.6 L858,209.5 L859,208.8 L860,208.4 L861,207.3 L862,206.9 L863,207.4 L864,207.4 L865,207.0 L866,207.0 L867,207.7 L868,207.8 L869,208.3 L870,209.2 L871,208.9 L872,210.5 L873,209.3 L874,209.2 L875,210.1 L876,209.7 L877,209.9 L878,209.4 L879,209.4 L880,209.2 L881,209.2 L882,209.3 L883,208.6 L884,209.3 L885,209.2 L886,209.4 L887,209.1 L888,208.8 L889,208.8 L890,209.2 L891,208.5 L892,208.4 L893,209.1 L894,209.0 L895,207.7 L896,208.1 L897,208.3 L898,207.4 L899,207.4 L900,206.6 L901,206.2 L902,206.1 L903,205.9 L904,205.8 L905,206.3 L906,206.9 L907,206.7 L908,208.1 L909,208.7 L910,209.2 L911,209.3 L912,209.4 L913,210.3 L914,209.8 L915,211.0 L916,210.8 L917,209.9 L918,209.7 L919,208.8 L920,208.3 L921,207.2 L922,206.8 L923,206.4 L924,205.4 L925,205.3 L926,204.1 L927,202.7 L928,202.7 L929,201.5 L930,201.6 L931,201.0 L932,200.7 L933,200.6 L934,200.7 L935,200.9 L936,199.8 L937,200.2 L938,200.6 L939,199.6 L940,200.4 L941,200.1 L942,200.4 L943,200.2 L944,199.8 L945,200.1 L946,199.6 L947,200.5 L948,200.1 L949,200.0 L950,199.7 L951,200.5 L952,199.8 L953,200.8 L954,200.8 L955,201.3 L956,201.0 L957,208.0 L958,211.8 L959,212.4 L960,212.9 L961,212.6 L962,213.6 L963,212.5 L964,213.7 L965,213.8 L966,214.0 L967,213.1 L968,213.8 L969,213.1 L970,213.7 L971,214.2 L972,214.4 L973,213.0 L974,212.3 L975,211.5 L976,211.8 L977,211.4 L978,211.7 L979,211.1 L980,211.5 L981,212.7 L982,214.2 L983,215.0 L984,215.4 L985,216.8 L986,216.7 L987,214.7 L988,213.5 L989,211.4 L990,209.3 L991,208.6 L992,207.3 L993,207.5 L994,206.8 L995,206.1 L996,205.7 L997,206.1 L998,206.6 L999,206.5 L1000,207.2 L1001,207.9 L1002,207.8 L1003,208.7 L1004,210.1 L1005,209.9 L1006,210.5 L1007,211.9 L1008,211.9 L1009,212.9 L1010,213.2 L1011,212.2 L1012,212.3 L1013,211.1 L1014,210.7 L1015,210.1 L1016,210.4 L1017,209.8 L1018,210.1 L1019,210.0 L1020,210.1 L1021,211.0 L1022,211.0 L1023,210.8 L1024,211.1 L1025,212.0 L1026,211.0 L1027,212.1 L1028,212.0 L1029,212.4 L1030,212.4 L1031,211.8 L1032,212.9 L1033,212.4 L1034,213.5 L1035,213.3 L1036,213.1 L1037,214.0 L1038,213.5 L1039,214.5 L1040,214.4 L1041,215.1 L1042,215.7 L1043,215.3 L1044,216.3 L1045,216.8 L1046,217.4 L1047,217.9 L1047,218.9 L1046,218.8 L1045,219.0 L1044,219.9 L1043,219.8 L1042,220.8 L1041,221.2 L1040,221.0 L1039,221.7 L1038,221.5 L1037,221.9 L1036,222.8 L1035,222.3 L1034,222.7 L1033,223.2 L1032,223.5 L1031,223.2 L1030,223.8 L1029,223.4 L1028,223.8 L1027,223.5 L1026,223.7 L1025,224.5 L1024,224.6 L1023,223.6 L1022,223.7 L1021,223.8 L1020,224.8 L1019,225.1 L1018,225.2 L1017,224.8 L1016,224.8 L1015,224.6 L1014,224.6 L1013,224.9 L1012,224.4 L1011,223.6 L1010,223.6 L1009,224.7 L1008,225.3 L1007,226.4 L1006,227.5 L1005,227.8 L1004,229.1 L1003,230.0 L1002,230.8 L1001,230.8 L1000,231.4 L999,231.8 L998,232.0 L997,232.1 L996,232.6 L995,233.3 L994,232.2 L993,232.3 L992,230.8 L991,231.2 L990,230.3 L989,226.7 L988,225.0 L987,221.6 L986,218.4 L985,220.3 L984,220.1 L983,221.1 L982,222.5 L981,223.4 L980,225.2 L979,225.9 L978,225.2 L977,226.0 L976,225.7 L975,224.5 L974,223.6 L973,222.4 L972,222.6 L971,222.7 L970,222.6 L969,222.7 L968,222.7 L967,222.9 L966,221.4 L965,222.1 L964,222.3 L963,223.2 L962,222.8 L961,222.5 L960,223.0 L959,223.5 L958,224.0 L957,228.0 L956,237.1 L955,237.2 L954,237.8 L953,237.2 L952,238.0 L951,237.8 L950,238.3 L949,237.5 L948,238.0 L947,237.4 L946,237.9 L945,237.9 L944,236.9 L943,237.8 L942,237.6 L941,236.8 L940,237.4 L939,237.3 L938,237.3 L937,236.8 L936,236.3 L935,236.2 L934,236.9 L933,236.5 L932,236.7 L931,235.9 L930,236.4 L929,235.4 L928,234.9 L927,234.3 L926,232.8 L925,232.6 L924,231.8 L923,230.7 L922,230.2 L921,229.9 L920,229.2 L919,228.6 L918,227.5 L917,227.9 L916,227.3 L915,226.7 L914,227.5 L913,226.9 L912,228.2 L911,228.4 L910,228.3 L909,227.7 L908,228.8 L907,228.9 L906,228.4 L905,228.7 L904,228.2 L903,229.0 L902,229.0 L901,228.4 L900,227.4 L899,227.7 L898,227.5 L897,228.0 L896,228.5 L895,227.9 L894,227.9 L893,228.1 L892,227.5 L891,228.1 L890,228.5 L889,227.9 L888,227.9 L887,227.7 L886,228.3 L885,227.8 L884,228.5 L883,227.4 L882,227.5 L881,227.9 L880,227.7 L879,228.1 L878,228.2 L877,228.1 L876,228.3 L875,228.1 L874,227.6 L873,227.8 L872,228.1 L871,228.4 L870,228.7 L869,228.6 L868,228.4 L867,229.2 L866,229.6 L865,229.0 L864,229.4 L863,229.5 L862,230.1 L861,229.3 L860,229.0 L859,228.0 L858,227.8 L857,226.8 L856,225.4 L855,225.9 L854,226.3 L853,226.1 L852,225.6 L851,225.5 L850,224.7 L849,225.0 L848,225.4 L847,225.5 L846,226.2 L845,226.6 L844,226.6 L843,226.6 L842,227.5 L841,228.6 L840,229.7 L839,231.5 L838,234.3 L837,237.2 L836,237.4 L835,237.5 L834,237.3 L833,237.5 L832,237.4 L831,236.6 L830,237.3 L829,236.6 L828,236.7 L827,237.5 L826,236.4 L825,237.4 L824,237.4 L823,237.5 L822,237.7 L821,237.1 L820,237.5 L819,237.4 L818,237.2 L817,237.9 L816,237.3 L815,237.5 L814,237.6 L813,237.7 L812,237.6 L811,237.8 L810,238.4 L809,238.2 L808,238.6 L807,238.1 L806,238.2 L805,238.3 L804,237.7 L803,238.4 L802,238.0 L801,238.3 L800,237.7 L799,238.2 L798,237.9 L797,237.9 L796,237.5 L795,238.6 L794,238.3 L793,238.2 L792,238.5 L791,238.0 L790,218.2 Z"/></svg>
<!-- dark background -->
<div class="a" style="left:0;top:293px;width:1065px;height:270px;background:#636685"></div>
<div class="a" style="left:0;top:100px;width:1px;height:463px;background:#9aa0bc"></div>
<!-- vertical scrollbar -->
<div class="a" style="left:1065px;top:127px;width:15px;height:451px;background:#f5f5f7;border-left:1px solid #e0e0e4"></div>
<div class="a" style="left:1072px;top:143px;width:2px;height:404px;background:#707070;border-radius:1px"></div>
<!-- horizontal scroll -->
<div class="a" style="left:0;top:563px;width:1080px;height:15px;background:#f0f0ee"></div>
<div class="a" style="left:142px;top:570.5px;width:726px;height:2px;background:#707070;border-radius:1px"></div>
<!-- bottom toolbar -->
<div class="a tb" style="left:0;top:578px;width:1080px;height:53px;border-top:1px solid #d4d4d8;border-bottom:1px solid #d4d4d8"></div>
<div class="sep" style="left:2px;top:580px;height:50px"></div>
<div class="grab" style="left:4px;top:582px;height:46px"></div>
<div class="sep" style="left:10px;top:580px;height:50px"></div>
<div class="a" style="left:16.5px;top:584px;width:12.5px;height:12.5px;border:1.5px solid #8c8c8c;border-radius:3px;background:#f6f6f6"></div>
<div class="t" style="left:32px;top:583px;font-size:11px;letter-spacing:0.3px;-webkit-text-stroke:0.15px #111;color:#111;font-family:'Liberation Serif',serif">Snap</div>
<div class="a" style="left:17px;top:604px;width:139px;height:23px;border:1px solid #8a8a8a;border-radius:2px;background:#fafafa"></div>
<div class="a" style="left:18px;top:607px;width:119px;height:17px;background:#ececec"></div>
<div class="t" style="left:21px;top:609px;font-size:12px;color:#9a9a9a">秒</div>
<svg class="a" style="left:141px;top:610px" width="12" height="10"><path d="M2 3 L6 7 L10 3" fill="none" stroke="#aaa" stroke-width="1"/></svg>
<div class="sep" style="left:161px;top:580px;height:50px"></div>
<div class="grab" style="left:164px;top:582px;height:46px"></div>
<div class="sep" style="left:170px;top:580px;height:50px"></div>
<!-- big time -->
<div class="a" style="left:172px;top:591px;width:215px;height:27px;background:#b7b9c3;border-top:2px solid #76767a;border-left:1px solid #76767a"></div>
<div class="a" style="left:174px;top:593px;width:28px;height:25px;background:#c9ccd8"></div>
<div class="a" style="left:246px;top:593px;width:28px;height:25px;background:#c9ccd8"></div>
<div class="a" style="left:318px;top:593px;width:27px;height:25px;background:#c9ccd8"></div>
<div class="a" style="left:379px;top:593px;width:8px;height:25px;background:#a6a7ad"></div>
<div class="t dg" style="left:176px;top:596px;font-size:22px;letter-spacing:4.3px">00</div>
<div class="t dc" style="left:214px;top:596px;font-size:19px">时</div>
<div class="t dg" style="left:247.5px;top:596px;font-size:22px;letter-spacing:4.3px">00</div>
<div class="t dc" style="left:286px;top:596px;font-size:19px">分</div>
<div class="t dg" style="left:319px;top:596px;font-size:22px;letter-spacing:4.3px">00</div>
<div class="t dc" style="left:357px;top:596px;font-size:19px">秒</div>
<svg class="a" style="left:379px;top:602px" width="8" height="6"><path d="M1 1 H7 L4 5 Z" fill="#111"/></svg>
<div class="sep" style="left:393px;top:580px;height:50px"></div>
<div class="grab" style="left:397px;top:582px;height:46px"></div>
<div class="sep" style="left:403px;top:580px;height:50px"></div>
<!-- selection -->
<div class="t" style="left:409px;top:582px;font-size:12px">选区</div>
<svg class="a" style="left:414px;top:607px" width="16" height="16"><circle cx="8" cy="8" r="2.3" fill="none" stroke="#333" stroke-width="1.1"/><path d="M8 1.5 L9.3 3.6 L11.8 3 L12 5.4 L14.4 6.5 L13 8.5 L14.4 10.5 L12 11.6 L11.8 14 L9.3 13.4 L8 15.5 L6.7 13.4 L4.2 14 L4 11.6 L1.6 10.5 L3 8.5 L1.6 6.5 L4 5.4 L4.2 3 L6.7 3.6 Z" fill="none" stroke="#333" stroke-width="1.1"/></svg>
<div class="a" style="left:437px;top:583.5px;width:191px;height:19px;background:#b7b9c3;border-top:2px solid #76767a;border-left:1px solid #76767a"></div>
<div class="a" style="left:439px;top:585.5px;width:21px;height:17px;background:#c9ccd8"></div>
<div class="a" style="left:489px;top:585.5px;width:21px;height:17px;background:#c9ccd8"></div>
<div class="a" style="left:538px;top:585.5px;width:21px;height:17px;background:#c9ccd8"></div>
<div class="a" style="left:565px;top:585.5px;width:33px;height:17px;background:#c9ccd8"></div>
<div class="a" style="left:619px;top:585.5px;width:9px;height:17px;background:#a6a7ad"></div>
<div class="t dg" style="left:440px;top:586.5px;font-size:15px;letter-spacing:3.4px">00</div>
<div class="t dc" style="left:467px;top:586.5px;font-size:14px">时</div>
<div class="t dg" style="left:490px;top:586.5px;font-size:15px;letter-spacing:3.4px">00</div>
<div class="t dc" style="left:516px;top:586.5px;font-size:14px">分</div>
<div class="t dg" style="left:539px;top:586.5px;font-size:15px;letter-spacing:3.4px">00.000</div>
<div class="t dc" style="left:604px;top:586.5px;font-size:14px">秒</div>
<svg class="a" style="left:619px;top:590.5px" width="9" height="6"><path d="M1.5 1 H7.5 L4.5 5 Z" fill="#111"/></svg>
<div class="a" style="left:437px;top:605.5px;width:191px;height:19px;background:#b7b9c3;border-top:2px solid #76767a;border-left:1px solid #76767a"></div>
<div class="a" style="left:439px;top:607.5px;width:21px;height:17px;background:#c9ccd8"></div>
<div class="a" style="left:489px;top:607.5px;width:21px;height:17px;background:#c9ccd8"></div>
<div class="a" style="left:538px;top:607.5px;width:21px;height:17px;background:#c9ccd8"></div>
<div class="a" style="left:565px;top:607.5px;width:33px;height:17px;background:#c9ccd8"></div>
<div class="a" style="left:619px;top:607.5px;width:9px;height:17px;background:#a6a7ad"></div>
<div class="t dg" style="left:440px;top:608.5px;font-size:15px;letter-spacing:3.4px">00</div>
<div class="t dc" style="left:467px;top:608.5px;font-size:14px">时</div>
<div class="t dg" style="left:490px;top:608.5px;font-size:15px;letter-spacing:3.4px">00</div>
<div class="t dc" style="left:516px;top:608.5px;font-size:14px">分</div>
<div class="t dg" style="left:539px;top:608.5px;font-size:15px;letter-spacing:3.4px">00.000</div>
<div class="t dc" style="left:604px;top:608.5px;font-size:14px">秒</div>
<svg class="a" style="left:619px;top:612.5px" width="9" height="6"><path d="M1.5 1 H7.5 L4.5 5 Z" fill="#111"/></svg>
<div class="sep" style="left:631px;top:580px;height:50px"></div>
<div class="grab" style="left:636px;top:582px;height:22px"></div>
<div class="btn" style="left:645px;top:581px;width:25px;height:24px;background:#e8ecf5"></div>
<svg class="a" style="left:650px;top:585px" width="14" height="16"><path d="M0.5 0.2 L13.3 6.7 L0.5 13.2 Z" fill="#3a8c56"/></svg>
<div class="t" style="left:674px;top:582px;font-size:11px;font-weight:bold">–</div>
<div class="t" style="left:794px;top:582px;font-size:11px;font-weight:bold">+</div>
<div class="a" style="left:675px;top:596px;width:128px;height:2px;background:#8a8a8a"></div>
<div class="a" style="left:675px;top:592px;width:1px;height:4px;background:#8a8a8a"></div>
<div class="a" style="left:680px;top:594px;width:1px;height:2px;background:#8a8a8a"></div>
<div class="a" style="left:684px;top:594px;width:1px;height:2px;background:#8a8a8a"></div>
<div class="a" style="left:689px;top:594px;width:1px;height:2px;background:#8a8a8a"></div>
<div class="a" style="left:694px;top:592px;width:1px;height:4px;background:#8a8a8a"></div>
<div class="a" style="left:699px;top:594px;width:1px;height:2px;background:#8a8a8a"></div>
<div class="a" style="left:704px;top:594px;width:1px;height:2px;background:#8a8a8a"></div>
<div class="a" style="left:708px;top:594px;width:1px;height:2px;background:#8a8a8a"></div>
<div class="a" style="left:713px;top:592px;width:1px;height:4px;background:#8a8a8a"></div>
<div class="a" style="left:718px;top:594px;width:1px;height:2px;background:#8a8a8a"></div>
<div class="a" style="left:722px;top:594px;width:1px;height:2px;background:#8a8a8a"></div>
<div class="a" style="left:727px;top:594px;width:1px;height:2px;background:#8a8a8a"></div>
<div class="a" style="left:732px;top:592px;width:1px;height:4px;background:#8a8a8a"></div>
<div class="a" style="left:737px;top:594px;width:1px;height:2px;background:#8a8a8a"></div>
<div class="a" style="left:742px;top:594px;width:1px;height:2px;background:#8a8a8a"></div>
<div class="a" style="left:746px;top:594px;width:1px;height:2px;background:#8a8a8a"></div>
<div class="a" style="left:751px;top:592px;width:1px;height:4px;background:#8a8a8a"></div>
<div class="a" style="left:756px;top:594px;width:1px;height:2px;background:#8a8a8a"></div>
<div class="a" style="left:760px;top:594px;width:1px;height:2px;background:#8a8a8a"></div>
<div class="a" style="left:765px;top:594px;width:1px;height:2px;background:#8a8a8a"></div>
<div class="a" style="left:770px;top:592px;width:1px;height:4px;background:#8a8a8a"></div>
<div class="a" style="left:775px;top:594px;width:1px;height:2px;background:#8a8a8a"></div>
<div class="a" style="left:780px;top:594px;width:1px;height:2px;background:#8a8a8a"></div>
<div class="a" style="left:784px;top:594px;width:1px;height:2px;background:#8a8a8a"></div>
<div class="a" style="left:789px;top:592px;width:1px;height:4px;background:#8a8a8a"></div>
<div class="a" style="left:794px;top:594px;width:1px;height:2px;background:#8a8a8a"></div>
<div class="a" style="left:798px;top:594px;width:1px;height:2px;background:#8a8a8a"></div>
<div class="a" style="left:713px;top:588px;width:9px;height:15px;border:1.3px solid #444;border-radius:3px;background:#f4f4f4"></div>
<div class="a" style="left:717px;top:593px;width:1.5px;height:5px;background:#444"></div>
<div class="sep" style="left:808px;top:580px;height:24px"></div>
<div class="sep" style="left:810px;top:580px;height:24px"></div>
<div class="a" style="left:634px;top:604px;width:446px;height:1px;background:#d4d4d8"></div>

<!-- status bar -->
<div class="a" style="left:0;top:631px;width:1080px;height:24px;background:#f0f0f0"></div>
<div class="a" style="left:173px;top:633px;width:1px;height:22px;background:#d8d8d8"></div><div class="a" style="left:915px;top:633px;width:1px;height:22px;background:#d8d8d8"></div>
<div class="t" style="left:14px;top:637px;font-size:12px;-webkit-text-stroke:0.25px #1a1a1a">已停止.</div>
<!-- watermark -->
<div class="t" style="left:861.5px;top:606.5px;font-size:27px;color:#fff;-webkit-text-stroke:0.5px #fff;text-shadow:1px 1px 0 #111,2px 2px 0 #111,2.5px 2.5px 1px #222">头条 @猴哥开发</div>
<!-- file menu -->
<div class="menu" style="left:1px;top:47px;width:196px;height:242px;border-radius:0 0 4px 4px"></div>
<div class="hl" style="left:7px;top:167px;width:186px;height:20px"></div>
<div class="mt" style="left:36px;top:54px">新建(N)</div><div class="mt sc" style="left:138px;top:52.5px">Ctrl+N</div>
<div class="mt" style="left:36px;top:74px">打开(O)...</div><div class="mt sc" style="left:138px;top:72.5px">Ctrl+O</div>
<div class="mt" style="left:36px;top:95px">最近的文件(F)</div><div class="arr" style="left:177px;top:97px"></div>
<div class="mt" style="left:36px;top:115px">关闭(C)</div><div class="mt sc" style="left:136px;top:113.5px">Ctrl+W</div>
<div class="msep" style="left:9px;top:134px;width:180px"></div>
<div class="mt" style="left:36px;top:144px">保存项目(S)</div><div class="arr" style="left:177px;top:146px"></div>
<div class="msep" style="left:9px;top:163px;width:180px"></div>
<div class="mt" style="left:36px;top:173px">导出(E)</div><div class="arr" style="left:177px;top:176px"></div>
<div class="mt" style="left:36px;top:194px">导入(I)</div><div class="arr" style="left:177px;top:196px"></div>
<div class="msep" style="left:9px;top:212px;width:180px"></div>
<div class="mt" style="left:36px;top:222px">页面设置(G)...</div>
<div class="mt" style="left:36px;top:243px">打印(P)...</div>
<div class="msep" style="left:9px;top:261px;width:180px"></div>
<div class="mt" style="left:36px;top:271px">退出(X)</div><div class="mt sc" style="left:138px;top:269.5px">Ctrl+Q</div>
<!-- export submenu -->
<div class="menu" style="left:194px;top:165px;width:256px;height:169px;border-radius:4px"></div>
<div class="hl" style="left:199px;top:167px;width:246px;height:20px"></div>
<div class="mt" style="left:228px;top:172px">导出为 MP3</div>
<div class="mt" style="left:228px;top:192.5px">导出为 WAV</div>
<div class="mt" style="left:228px;top:213px">导出为 OGG</div>
<div class="mt" style="left:228px;top:233.5px">导出音频(E)...</div><div class="mt sc" style="left:361px;top:232.5px">Ctrl+Shift+E</div>
<div class="mt" style="left:228px;top:253.5px">导出选择的音频(R)...</div>
<div class="mt dis" style="left:228px;top:274.5px">导出标签(L)...</div>
<div class="mt" style="left:228px;top:294.5px">导出多个文件(M)...</div><div class="mt sc" style="left:362px;top:293.5px">Ctrl+Shift+L</div>
<div class="mt dis" style="left:228px;top:314.5px">导出 MIDI...</div>

<div class="a" style="left:0;top:563px;width:1px;height:92px;background:#6f8fc0"></div>
<div class="a" style="left:0;top:648px;width:5px;height:7px;background:#4f78b4;clip-path:polygon(0 0,30% 60%,100% 100%,0 100%)"></div>
</body></html>
